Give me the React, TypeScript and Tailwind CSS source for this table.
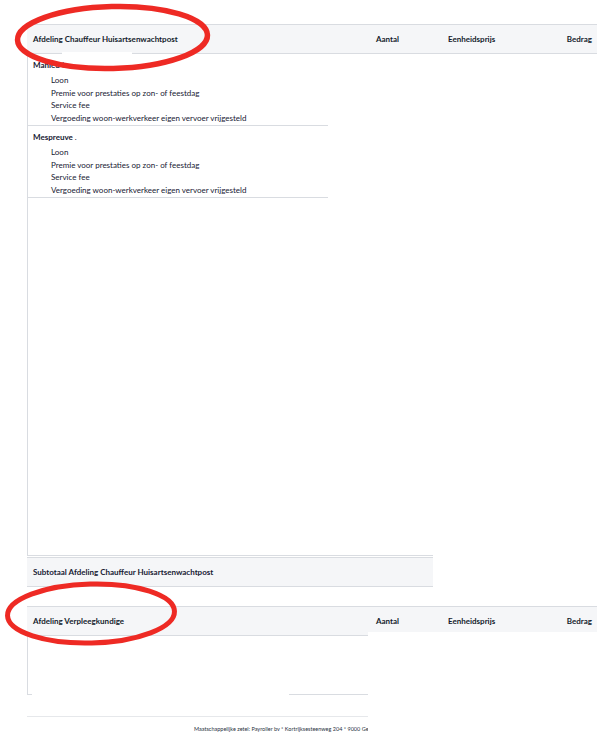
import React from "react"

const staff = [
  {
    name: "Mahieu",
    suffix: " I",
    lines: [
      "Loon",
      "Premie voor prestaties op zon- of feestdag",
      "Service fee",
      "Vergoeding woon-werkverkeer eigen vervoer vrijgesteld",
    ],
  },
  {
    name: "Mespreuve",
    suffix: " .",
    lines: [
      "Loon",
      "Premie voor prestaties op zon- of feestdag",
      "Service fee",
      "Vergoeding woon-werkverkeer eigen vervoer vrijgesteld",
    ],
  },
]

function TableHead({ title, cut }: { title: string; cut?: boolean }) {
  return (
    <div className="relative flex h-[30px] items-center border-y border-[#d9dce1] bg-[#f5f6f8] text-[8px] font-bold text-[#141c2c]">
      <div className="w-[349px] pl-[6px]">{title}</div>
      <div className="w-[72px]">Aantal</div>
      <div className="w-[100px]">Eenheidsprijs</div>
      <div className="flex-1 pr-[5px] text-right">Bedrag</div>
      {cut && <div className="absolute bottom-[-1px] left-[341px] right-0 h-[4px] bg-white" />}
    </div>
  )
}

export default function App() {
  return (
    <div
      className="relative h-[733px] w-[616px] overflow-hidden bg-white text-[#172033]"
      style={{ fontFamily: "Lato, 'Noto Sans', sans-serif" }}
    >
      <div className="ml-[27px] w-[570px] pt-[24px]">
        {/* Section 1 */}
        <div className="relative">
          <TableHead title="Afdeling Chauffeur Huisartsenwachtpost" />
          <div className="absolute bottom-[-1px] left-[35px] h-[3px] w-[70px] bg-white" />
        </div>

        <div className="h-[502px] w-[406px] border-b border-l border-[#d9dce1]">
          {staff.map((p) => (
            <div key={p.name} className="w-[300px] border-b border-[#d9dce1] pb-[1px] pt-[5px]">
              <div className="h-[12px] pl-[5px] text-[8px] font-bold leading-[12px]">
                {p.name}
                <span className="font-normal">{p.suffix}</span>
              </div>
              <div className="mt-[3px] pl-[23px] text-[8px]">
                {p.lines.map((l) => (
                  <div key={l} className="h-[12.5px] leading-[12.5px]">
                    {l}
                  </div>
                ))}
              </div>
            </div>
          ))}
        </div>

        <div className="mt-[1px] flex h-[30px] w-[406px] items-center border-y border-[#d9dce1] bg-[#f5f6f8] pl-[6px] text-[8px] font-bold">
          Subtotaal Afdeling Chauffeur Huisartsenwachtpost
        </div>

        {/* Section 2 */}
        <div className="mt-[19px]">
          <TableHead title="Afdeling Verpleegkundige" cut />
        </div>
        <div className="relative h-[59px] w-[341px] border-b border-l border-[#d9dce1]">
          <div className="absolute bottom-[-1px] left-[4px] h-[2px] w-[257px] bg-white" />
        </div>

        {/* Footer */}
        <div className="mt-[21px] w-[341px] overflow-hidden border-t border-[#e6e8eb]">
          <div className="whitespace-nowrap pl-[167px] pt-[9px] text-[5.5px] leading-[6px] text-[#2a3242]">
            Maatschappelijke zetel: Payroller bv * Kortrijksesteenweg 204 * 9000 Gent
          </div>
        </div>
      </div>

      {/* annotation marks */}
      <svg className="pointer-events-none absolute left-0 top-0" width="616" height="733">
        <ellipse cx="112.5" cy="37.5" rx="95" ry="31" fill="none" stroke="#ee2a24" strokeWidth="5.5" transform="rotate(-1.5 112.5 37.5)" />
        <ellipse cx="91" cy="613.5" rx="83.5" ry="29.5" fill="none" stroke="#ee2a24" strokeWidth="5" transform="rotate(-1.5 91 613.5)" />
      </svg>
    </div>
  )
}
